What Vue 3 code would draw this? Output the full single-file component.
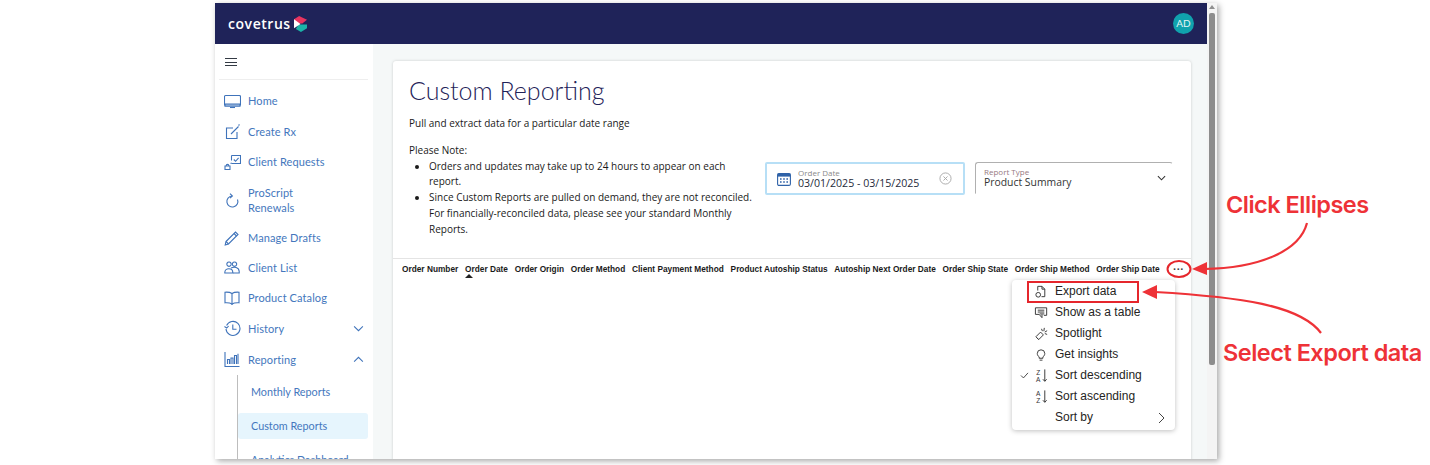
<script setup>
const navItems = [
  { label: ['Home'], h: 32, fillFirst: true, paths: ['M1.5 2.5h14a1 1 0 0 1 1 1v8.5H.5V3.5a1 1 0 0 1 1-1z', 'M1 11h15v2.2H1z', 'M6 14.5h5'] },
  { label: ['Create Rx'], h: 30, paths: ['M9 4H2.5v10.5H13V8', 'M7 10l7.5-7.5', 'M14.5 1.5l1 -1'] },
  { label: ['Client Requests'], h: 30, paths: ['M7.5 1.5h9v8h-9', 'M7.5 1.5v5', 'M9.8 5.5l1.8 1.8 3-3.4', 'M1 15.5v-3.5h5v3.5z', 'M2.2 12a1.3 1.6 0 1 1 2.6 0', 'M6.5 9.5l1.2-.5'] },
  { label: ['ProScript', 'Renewals'], h: 46, paths: ['M13.5 7.5A5.5 5.5 0 1 1 8 4', 'M6 1.6L8.4 4 6 6.2'] },
  { label: ['Manage Drafts'], h: 30, paths: ['M2 11.5L11.5 2l2.5 2.5L4.5 14 1.2 15z', 'M10 3.5l2.5 2.5', 'M2 11.5l2.5 2.5'] },
  { label: ['Client List'], h: 30, paths: ['M5 2a2.2 2.2 0 1 0 .01 0z', 'M10.5 2a2.2 2.2 0 1 0 .01 0z', 'M.8 12.5c0-5 8-5 8 0v.5H.8z', 'M7 8c3-1.5 8-1 8.2 3.5v1.5H9'] },
  { label: ['Product Catalog'], h: 30, paths: ['M8 3.5C6 2.2 3.5 2 1 2.2v10.6c2.5-.2 5 0 7 1.2 2-1.2 4.5-1.4 7-1.2V2.2C12.5 2 10 2.2 8 3.5z', 'M8 3.5V15'] },
  { label: ['History'], h: 31, chevron: 'down', paths: ['M2.6 5.5A7 7 0 1 1 2 9', 'M.5 6.5l2.2 1.6L4.6 6', 'M8.8 4.5v4.8H12.5'] },
  { label: ['Reporting'], h: 31, chevron: 'up', paths: ['M1 1v14.5h14.5', 'M3.5 13V8.5h2V13', 'M7 13V7h2v6', 'M10.5 13V4.5h2V13', 'M14 13V2.8'] },
];

const columns = ['Order Number', 'Order Date', 'Order Origin', 'Order Method', 'Client Payment Method', 'Product Autoship Status', 'Autoship Next Order Date', 'Order Ship State', 'Order Ship Method', 'Order Ship Date'];

const menuItems = [
  { label: 'Export data', paths: ['M4 7V2.5h4.5l3 3v8H8', 'M8.5 2.5v3h3', 'M2 11.5a2.5 2.5 0 1 0 5 .01 2.5 2.5 0 1 0-5-.01z'] },
  { label: 'Show as a table', paths: ['M1.5 3h12v8h-3', 'M1.5 3v7h4', 'M4 5.5h7', 'M4 7.5h7', 'M6 9.5h5', 'M5.5 10l3 3.5v-3.5'] },
  { label: 'Spotlight', paths: ['M2 11.5L7 6.5l3 3-5 5z', 'M3.5 13l1.2 1', 'M8 3l1 2.5', 'M11 2l-.5 3.5', 'M14 5l-2.5 1.5', 'M14 9l-2.5-1'] },
  { label: 'Get insights', paths: ['M5.5 10.5C4 9.5 3.5 8.2 3.5 7a4 4 0 0 1 8 0c0 1.2-.5 2.5-2 3.5v1.5h-4z', 'M6 14h3'] },
  { label: 'Sort descending', checked: true, sort: ['Z', 'A'] },
  { label: 'Sort ascending', sort: ['A', 'Z'] },
  { label: 'Sort by', arrow: true },
];
</script>

<template>
  <div class="page">
    <div class="window">
      <div class="app">
        <header class="topbar">
          <div class="brand">
            <span class="brand-name">covetrus</span>
            <svg class="brand-mark" viewBox="0 0 14 17" aria-hidden="true">
              <polygon points="0,3.5 5.5,0 14,4 9,8 0,8" fill="#e8345f" />
              <polygon points="5,9 14,9 14,13 7.5,17 2,14" fill="#1bb3a8" />
              <polygon points="0,3.5 7,8.5 0,13" fill="#ffffff" />
            </svg>
          </div>
          <div class="avatar">AD</div>
        </header>

        <div class="body">
          <aside class="sidebar">
            <div class="burger"><span></span><span></span><span></span></div>
            <nav class="nav">
              <a v-for="item in navItems" :key="item.label[0]" class="nav-item" :style="{ height: item.h + 'px' }">
                <svg class="nav-icon" viewBox="0 0 17 17" aria-hidden="true">
                  <path v-for="d in item.paths" :key="d" :d="d" />
                </svg>
                <span class="nav-label"><span v-for="line in item.label" :key="line" class="nav-line">{{ line }}</span></span>
                <svg v-if="item.chevron" class="nav-chevron" viewBox="0 0 12 8" aria-hidden="true">
                  <path :d="item.chevron === 'down' ? 'M1 1.5l5 5 5-5' : 'M1 6.5l5-5 5 5'" />
                </svg>
              </a>
              <div class="subnav">
                <a class="sub-item">Monthly Reports</a>
                <a class="sub-item active">Custom Reports</a>
                <a class="sub-item">Analytics Dashboard</a>
              </div>
            </nav>
          </aside>

          <main class="main">
            <section class="card">
              <div class="intro">
                <div class="copy">
                  <h1 class="title">Custom Reporting</h1>
                  <p class="lead">Pull and extract data for a particular date range</p>
                  <p class="note">Please Note:</p>
                  <ul class="notes">
                    <li>Orders and updates may take up to 24 hours to appear on each report.</li>
                    <li>Since Custom Reports are pulled on demand, they are not reconciled. For financially-reconciled data, please see your standard Monthly Reports.</li>
                  </ul>
                </div>
                <div class="filters">
                  <div class="date-field">
                    <svg class="cal" viewBox="0 0 14 14" aria-hidden="true">
                      <rect x="0.6" y="1.6" width="12.8" height="11.8" rx="1.4" fill="none" stroke="#2f62a8" stroke-width="1.1" />
                      <rect x="0.6" y="1.6" width="12.8" height="3" fill="#2f62a8" />
                      <path d="M3 7h1.6M6.2 7h1.6M9.4 7H11M3 10h1.6M6.2 10h1.6M9.4 10H11" stroke="#2f62a8" stroke-width="1.3" />
                    </svg>
                    <div class="date-text">
                      <span class="float-label">Order Date</span>
                      <span class="value">03/01/2025 - 03/15/2025</span>
                    </div>
                    <svg class="clear" viewBox="0 0 14 14" aria-hidden="true">
                      <circle cx="7" cy="7" r="6" />
                      <path d="M4.8 4.8l4.4 4.4M9.2 4.8l-4.4 4.4" />
                    </svg>
                  </div>
                  <div class="type-field">
                    <div class="type-text">
                      <span class="float-label rosy">Report Type</span>
                      <span class="value small">Product Summary</span>
                    </div>
                    <svg class="type-chevron" viewBox="0 0 10 6" aria-hidden="true"><path d="M1 1l4 4 4-4" /></svg>
                  </div>
                </div>
              </div>

              <div class="table-head">
                <span v-for="(col, i) in columns" :key="col" class="col" :class="{ sorted: i === 1 }">{{ col }}</span>
                <span class="more">···</span>
              </div>

              <div class="menu">
                <div v-for="m in menuItems" :key="m.label" class="menu-item">
                  <svg class="menu-check" viewBox="0 0 10 8" aria-hidden="true">
                    <path v-if="m.checked" d="M1 4l2.8 2.8L9 1" />
                  </svg>
                  <svg class="menu-icon" viewBox="0 0 16 16" aria-hidden="true">
                    <template v-if="m.sort">
                      <text x="4.5" y="7" class="sort-letter">{{ m.sort[0] }}</text>
                      <text x="4.5" y="14.5" class="sort-letter">{{ m.sort[1] }}</text>
                      <path d="M11.5 1.5v12.5M9.5 12l2 2.2 2-2.2" />
                    </template>
                    <path v-for="d in m.paths" v-else :key="d" :d="d" />
                  </svg>
                  <span class="menu-label">{{ m.label }}</span>
                  <svg v-if="m.arrow" class="menu-arrow" viewBox="0 0 7 12" aria-hidden="true"><path d="M1 1l5 5-5 5" /></svg>
                </div>
              </div>
            </section>
          </main>
        </div>
      </div>

      <div class="scrollbar">
        <span class="scroll-up"></span>
        <span class="scroll-thumb"></span>
      </div>
    </div>

    <svg class="overlay" viewBox="0 0 1430 465" aria-hidden="true">
      <rect x="1028" y="282" width="110" height="20" fill="none" stroke="#e5262c" stroke-width="2" />
      <ellipse cx="1179" cy="269" rx="11.5" ry="8" fill="none" stroke="#e5262c" stroke-width="2" />
      <path d="M1307 223C1300 250 1262 268 1204 269" fill="none" stroke="#ee3237" stroke-width="2.2" />
      <polygon points="1192,269 1207,262 1207,275" fill="#ee3237" />
      <path d="M1321 333C1300 305 1240 297 1155 292" fill="none" stroke="#ee3237" stroke-width="2.2" />
      <polygon points="1142,292 1157,285 1157,299" fill="#ee3237" />
    </svg>
    <span class="callout one">Click Ellipses</span>
    <span class="callout two">Select Export data</span>
  </div>
</template>

<style scoped>
.page {
  position: relative;
  box-sizing: border-box;
  width: 1430px;
  height: 465px;
  padding: 3px 0 0 215px;
  background: #ffffff;
  overflow: hidden;
}
.window {
  display: flex;
  width: 1002px;
  height: 456px;
  box-shadow: 2px 2px 6px rgba(0, 0, 0, 0.35);
}
.app {
  display: flex;
  flex-direction: column;
  flex: 1;
  min-width: 0;
}
.topbar {
  flex: none;
  display: flex;
  align-items: center;
  justify-content: space-between;
  height: 41px;
  padding: 0 13px;
  background: #1f2359;
}
.brand {
  display: flex;
  align-items: center;
  gap: 3px;
}
.brand-name {
  font: 600 14px/1 "Open Sans", sans-serif;
  letter-spacing: 0.55px;
  color: #ffffff;
}
.brand-mark {
  width: 13px;
  height: 16px;
}
.avatar {
  width: 21px;
  height: 21px;
  border-radius: 50%;
  background: #10a2ad;
  color: #e6f6f7;
  font: 400 10px/21px "Lato", sans-serif;
  text-align: center;
}
.body {
  flex: 1;
  display: flex;
  min-height: 0;
}
.sidebar {
  flex: none;
  width: 158px;
  background: #ffffff;
  overflow: hidden;
}
.burger {
  display: flex;
  flex-direction: column;
  gap: 2.5px;
  height: 36px;
  margin: 0 5px 0 4px;
  padding: 14px 0 0 6px;
  box-sizing: border-box;
  border-bottom: 1px solid #eeeeee;
}
.burger span {
  display: block;
  width: 12px;
  height: 1px;
  background: #333a44;
}
.nav {
  padding-top: 5px;
}
.nav-item {
  display: flex;
  align-items: center;
  padding-left: 9px;
  color: #4477bd;
}
.nav-icon {
  flex: none;
  width: 17px;
  height: 17px;
  margin-right: 7px;
  fill: none;
  stroke: #3f73ba;
  stroke-width: 1.1;
}
.nav-label {
  flex: 1;
  font: 400 11px/15.5px "Lato", sans-serif;
  letter-spacing: 0.1px;
}
.nav-line {
  display: block;
}
.nav-chevron {
  width: 11px;
  height: 7px;
  margin-right: 9px;
  fill: none;
  stroke: #3f73ba;
  stroke-width: 1.2;
}
.subnav {
  margin: 0 5px 0 22px;
  padding-top: 4px;
  border-left: 1px solid #bdbdbd;
}
.sub-item {
  display: block;
  height: 26px;
  margin-bottom: 8px;
  padding-left: 13px;
  border-radius: 3px;
  color: #4477bd;
  font: 400 10.8px/26px "Lato", sans-serif;
  white-space: nowrap;
}
.sub-item.active {
  background: #e6f5fd;
}
.main {
  flex: 1;
  min-width: 0;
  padding: 17px 16px 0 20px;
  background: #f5f8f8;
  overflow: hidden;
}
.card {
  position: relative;
  height: 460px;
  background: #ffffff;
  border-radius: 3px;
  box-shadow: 0 0 3px rgba(0, 0, 0, 0.18);
}
.intro {
  display: flex;
  align-items: flex-start;
  height: 197px;
  padding: 0 17px 0 16px;
}
.copy {
  flex: none;
  width: 345px;
  margin-right: 11px;
}
.title {
  margin: 14px 0 0;
  font: 300 25px/30px "Lato", sans-serif;
  color: #1f2359;
}
.lead,
.note,
.notes {
  font: 400 10px/15.75px "Open Sans", sans-serif;
  color: #1a1a1a;
}
.lead {
  margin: 11px 0 0;
}
.note {
  margin: 11px 0 0;
}
.notes {
  margin: 0;
  padding: 0 0 0 20px;
}
.filters {
  display: flex;
  gap: 10px;
  margin-top: 101px;
}
.date-field {
  box-sizing: border-box;
  display: flex;
  align-items: center;
  width: 200px;
  height: 33px;
  padding: 0 11px 0 10px;
  border: 2px solid #b7dff6;
  border-radius: 2px;
}
.cal {
  flex: none;
  width: 14px;
  height: 14px;
  margin-right: 7px;
}
.date-text,
.type-text {
  flex: 1;
  display: flex;
  flex-direction: column;
}
.float-label {
  font: 400 8px/9px "Open Sans", sans-serif;
  color: #8a8a8a;
}
.float-label.rosy {
  color: #97797f;
}
.value {
  font: 400 10.6px/13px "Open Sans", sans-serif;
  color: #1e2a3a;
  white-space: nowrap;
}
.value.small {
  font-size: 10.4px;
  color: #333333;
}
.clear {
  flex: none;
  width: 13px;
  height: 13px;
  fill: none;
  stroke: #a8a8a8;
  stroke-width: 1;
}
.type-field {
  box-sizing: border-box;
  display: flex;
  align-items: center;
  width: 198px;
  height: 32px;
  padding: 0 8px;
  border: 1px solid #b0b0b0;
  border-bottom-color: transparent;
  border-right-color: transparent;
  border-radius: 3px 3px 0 0;
}
.type-chevron {
  width: 9px;
  height: 6px;
  margin-right: -2px;
  fill: none;
  stroke: #333333;
  stroke-width: 1.2;
}
.table-head {
  display: flex;
  align-items: center;
  gap: 6.8px;
  height: 20px;
  padding-left: 9px;
  border-top: 1px solid #e4e4e4;
}
.col {
  position: relative;
  font: 700 8.3px/20px "Liberation Sans", sans-serif;
  color: #1a1a1a;
  white-space: nowrap;
}
.col.sorted::after {
  content: "";
  position: absolute;
  left: 0;
  top: 15px;
  border-left: 4px solid transparent;
  border-right: 4px solid transparent;
  border-bottom: 4px solid #222222;
}
.more {
  position: absolute;
  left: 780px;
  top: 203px;
  font: 700 11px/11px "Liberation Sans", sans-serif;
  color: #444444;
}
.menu {
  position: absolute;
  left: 619px;
  top: 219px;
  box-sizing: border-box;
  width: 163px;
  height: 150px;
  padding-top: 1px;
  background: #ffffff;
  border-radius: 4px;
  box-shadow: 0 1px 5px rgba(0, 0, 0, 0.25);
}
.menu-item {
  display: flex;
  align-items: center;
  height: 21px;
}
.menu-check {
  flex: none;
  width: 9px;
  height: 7px;
  margin: 0 5px 0 8px;
  fill: none;
  stroke: #333333;
  stroke-width: 1;
}
.menu-icon {
  flex: none;
  width: 15px;
  height: 15px;
  margin-right: 6px;
  fill: none;
  stroke: #333333;
  stroke-width: 1;
}
.sort-letter {
  font: 400 7px "Liberation Sans", sans-serif;
  fill: #333333;
  stroke: none;
  text-anchor: middle;
}
.menu-label {
  flex: 1;
  font: 400 12px/21px "Liberation Sans", sans-serif;
  color: #252423;
}
.menu-arrow {
  width: 7px;
  height: 12px;
  margin-right: 10px;
  fill: none;
  stroke: #444444;
  stroke-width: 1;
}
.scrollbar {
  position: relative;
  flex: none;
  display: flex;
  flex-direction: column;
  align-items: center;
  width: 10px;
  background: #f4f4f4;
}
.scroll-up {
  margin-top: 2px;
  border-left: 3px solid transparent;
  border-right: 3px solid transparent;
  border-bottom: 4px solid #8f8f8f;
}
.scroll-thumb {
  width: 6px;
  height: 352px;
  margin-top: 4px;
  border-radius: 2px;
  background: #8d8d8d;
}
.overlay {
  position: absolute;
  left: 0;
  top: 0;
  width: 1430px;
  height: 465px;
  pointer-events: none;
}
.callout {
  position: absolute;
  font: 600 23.5px/26px "Inter", sans-serif;
  letter-spacing: -0.5px;
  color: #ee3237;
  white-space: nowrap;
}
.callout.one {
  left: 1226px;
  top: 192px;
}
.callout.two {
  left: 1223px;
  top: 340px;
}
</style>
